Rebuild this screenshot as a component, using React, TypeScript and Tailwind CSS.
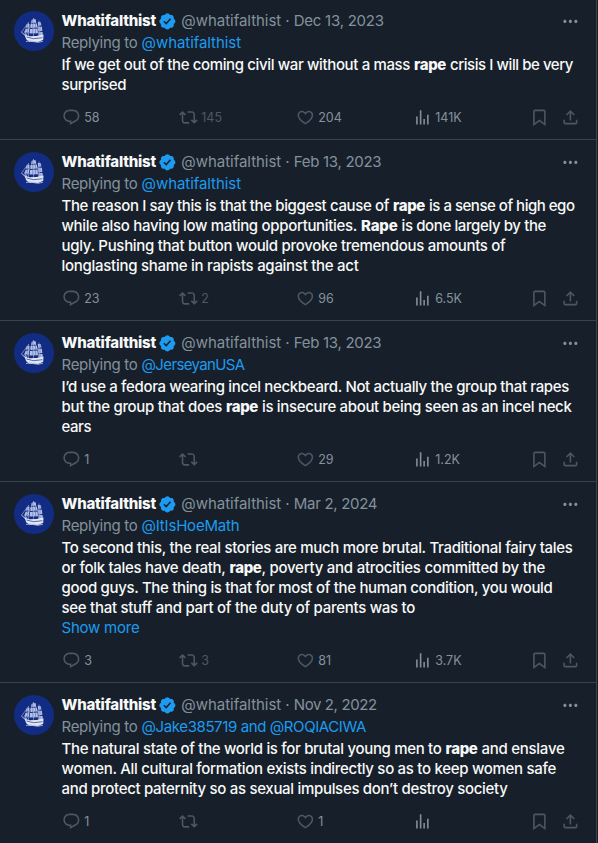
import { useLayoutEffect, useRef, useState, type ReactNode } from "react";

// [text, width in px, bold?]
type Run = [string, number, boolean?];

interface Tweet {
  id: number;
  date: Run;
  replyingTo: Run;
  lines: Run[][];
  more?: boolean;
  replies: string;
  reposts: string;
  likes: string;
  views: string;
}

const TWEETS: Tweet[] = [
  {
    id: 1,
    date: ["Dec 13, 2023", 90],
    replyingTo: ["@whatifalthist", 99.5],
    lines: [
      [["If we get out of the coming civil war without a mass", 348.5], ["rape", 32, true], ["crisis I will be very", 123]],
      [["surprised", 64.5]],
    ],
    replies: "58",
    reposts: "145",
    likes: "204",
    views: "141K",
  },
  {
    id: 2,
    date: ["Feb 13, 2023", 87.5],
    replyingTo: ["@whatifalthist", 99.5],
    lines: [
      [["The reason I say this is that the biggest cause of", 327.5], ["rape", 32, true], ["is a sense of high ego", 145.5]],
      [["while also having low mating opportunities.", 295.5], ["Rape", 36.5, true], ["is done largely by the", 144.5]],
      [["ugly. Pushing that button would provoke tremendous amounts of", 444]],
      [["longlasting shame in rapists against the act", 297]],
    ],
    replies: "23",
    reposts: "2",
    likes: "96",
    views: "6.5K",
  },
  {
    id: 3,
    date: ["Feb 13, 2023", 87.5],
    replyingTo: ["@JerseyanUSA", 103],
    lines: [
      [["I’d use a fedora wearing incel neckbeard. Not actually the group that rapes", 507.5]],
      [["but the group that does", 160.5], ["rape", 32, true], ["is insecure about being seen as an incel neck", 309.5]],
      [["ears", 29.5]],
    ],
    replies: "1",
    reposts: "",
    likes: "29",
    views: "1.2K",
  },
  {
    id: 4,
    date: ["Mar 2, 2024", 83.5],
    replyingTo: ["@ItIsHoeMath", 98],
    lines: [
      [["To second this, the real stories are much more brutal. Traditional fairy tales", 511]],
      [["or folk tales have death,", 164], ["rape", 32, true], [", poverty and atrocities committed by the", 283.5]],
      [["good guys. The thing is that for most of the human condition, you would", 491]],
      [["see that stuff and part of the duty of parents was to", 353.5]],
    ],
    more: true,
    replies: "3",
    reposts: "3",
    likes: "81",
    views: "3.7K",
  },
  {
    id: 5,
    date: ["Nov 2, 2022", 83],
    replyingTo: ["@Jake385719 and @ROQIACIWA", 224.5],
    lines: [
      [["The natural state of the world is for brutal young men to", 380], ["rape", 32, true], ["and enslave", 83]],
      [["women. All cultural formation exists indirectly so as to keep women safe", 494.5]],
      [["and protect paternity so as sexual impulses don’t destroy society", 446]],
    ],
    replies: "1",
    reposts: "",
    likes: "1",
    views: "",
  },
];

const ICONS = {
  reply:
    "M1.751 10c0-4.42 3.584-8 8.005-8h4.366c4.49 0 8.129 3.64 8.129 8.13 0 2.96-1.607 5.68-4.196 7.11l-8.054 4.46v-3.69h-.067c-4.49.1-8.183-3.51-8.183-8.01zm8.005-6c-3.317 0-6.005 2.69-6.005 6 0 3.37 2.77 6.08 6.138 6.01l.351-.01h1.761v2.3l5.087-2.81c1.951-1.08 3.163-3.13 3.163-5.36 0-3.39-2.744-6.13-6.129-6.13H9.756z",
  repost:
    "M4.5 3.88l4.432 4.14-1.364 1.46L5.5 7.55V16c0 1.1.896 2 2 2H13v2H7.5c-2.209 0-4-1.79-4-4V7.55L1.432 9.48.068 8.02 4.5 3.88zM16.5 6H11V4h5.5c2.209 0 4 1.79 4 4v8.45l2.068-1.93 1.364 1.46-4.432 4.14-4.432-4.14 1.364-1.46 2.068 1.93V8c0-1.1-.896-2-2-2z",
  like:
    "M16.697 5.5c-1.222-.06-2.679.51-3.89 2.16l-.805 1.09-.806-1.09C9.984 6.01 8.526 5.44 7.304 5.5c-1.243.07-2.349.78-2.91 1.91-.552 1.12-.633 2.78.479 4.82 1.074 1.97 3.257 4.27 7.129 6.61 3.87-2.34 6.052-4.64 7.126-6.61 1.111-2.04 1.03-3.7.477-4.82-.561-1.13-1.666-1.84-2.908-1.91zm4.187 7.69c-1.351 2.48-4.001 5.12-8.379 7.67l-.503.3-.504-.3c-4.379-2.55-7.029-5.19-8.382-7.67-1.36-2.5-1.41-4.86-.514-6.67.887-1.79 2.647-2.91 4.601-3.01 1.651-.09 3.368.56 4.798 2.01 1.429-1.45 3.146-2.1 4.796-2.01 1.954.1 3.714 1.22 4.601 3.01.896 1.81.846 4.17-.514 6.67z",
  views:
    "M8.75 21V3h2v18h-2zM18 21V8.5h2V21h-2zM4 21l.004-10h2L6 21H4zm9.248 0v-7h2v7h-2z",
  bookmark:
    "M4 4.5C4 3.12 5.119 2 6.5 2h11C18.881 2 20 3.12 20 4.5v18.44l-8-5.71-8 5.71V4.5zM6.5 4c-.276 0-.5.22-.5.5v14.56l6-4.29 6 4.29V4.5c0-.28-.224-.5-.5-.5h-11z",
  share:
    "M12 2.59l5.7 5.7-1.41 1.42L13 6.41V16h-2V6.41l-3.3 3.3-1.41-1.42L12 2.59zM21 15l-.02 3.51c0 1.38-1.12 2.49-2.5 2.49H5.5C4.11 21 3 19.88 3 18.5V15h2v3.5c0 .28.22.5.5.5h12.98c.28 0 .5-.22.5-.5L19 15h2z",
  more:
    "M3 12c0-1.1.9-2 2-2s2 .9 2 2-.9 2-2 2-2-.9-2-2zm9 2c1.1 0 2-.9 2-2s-.9-2-2-2-2 .9-2 2 .9 2 2 2zm7 0c1.1 0 2-.9 2-2s-.9-2-2-2-2 .9-2 2 .9 2 2 2z",
};

function Icon({ name, className = "" }: { name: keyof typeof ICONS; className?: string }) {
  return (
    <svg viewBox="0 0 24 24" className={`size-[18.75px] shrink-0 fill-current ${className}`} aria-hidden="true">
      <path d={ICONS[name]} />
    </svg>
  );
}

function VerifiedBadge() {
  return (
    <svg viewBox="0 0 22 22" className="ml-[1.5px] size-[18.75px] shrink-0 fill-[#1d9bf0]" aria-label="Verified account">
      <path d="M20.396 11c-.018-.646-.215-1.275-.57-1.816-.354-.54-.852-.972-1.438-1.246.223-.607.27-1.264.14-1.897-.131-.634-.437-1.218-.882-1.687-.47-.445-1.053-.75-1.687-.882-.633-.13-1.29-.083-1.897.14-.273-.587-.704-1.086-1.245-1.44S11.647 1.62 11 1.604c-.646.017-1.273.213-1.813.568s-.969.854-1.24 1.44c-.608-.223-1.267-.272-1.902-.14-.635.13-1.22.436-1.69.882-.445.47-.749 1.055-.878 1.688-.13.633-.08 1.29.144 1.896-.587.274-1.087.705-1.443 1.245-.356.54-.555 1.17-.574 1.817.02.647.218 1.276.574 1.817.356.54.856.972 1.443 1.245-.224.606-.274 1.263-.144 1.896.13.634.433 1.218.877 1.688.47.443 1.054.747 1.687.878.633.132 1.29.084 1.897-.136.274.586.705 1.084 1.246 1.439.54.354 1.17.551 1.816.569.647-.016 1.276-.213 1.817-.567s.972-.854 1.245-1.44c.604.239 1.266.296 1.903.164.636-.132 1.22-.447 1.68-.907.46-.46.776-1.044.908-1.681s.075-1.299-.165-1.903c.586-.274 1.084-.705 1.439-1.246.354-.54.551-1.17.569-1.816zM9.662 14.85l-3.429-3.428 1.293-1.302 2.072 2.072 4.4-4.794 1.347 1.246z" />
    </svg>
  );
}

/** Text whose letter spacing is adjusted so that it sets to the given width */
function Fit({ width, className = "", children }: { width: number; className?: string; children: string }) {
  const ref = useRef<HTMLSpanElement>(null);
  const [spacing, setSpacing] = useState(0);

  useLayoutEffect(() => {
    if (!ref.current) return;
    const natural = ref.current.getBoundingClientRect().width - spacing * children.length;
    setSpacing((width - natural) / children.length);
  }, [width, children]);

  return (
    <span ref={ref} className={`whitespace-pre ${className}`} style={{ letterSpacing: `${spacing}px` }}>
      {children}
    </span>
  );
}

function Avatar() {
  return (
    <svg viewBox="0 0 40 40" className="size-10 shrink-0" aria-hidden="true">
      <circle cx="20" cy="20" r="20" fill="#122c84" />
      {/* masts and rigging */}
      <g stroke="#8f9fd0" strokeWidth="0.7" fill="none">
        <path d="M14.5 11v17M19.5 7v21M25 9.5v19M7.5 21l7-9.5M19.5 7.5L12 25M19.5 7.5l9 19M7 21l7 6" />
      </g>
      {/* sails */}
      <g fill="#b4c0e3">
        <path d="M17.5 9l4-1 .8 3.5-5 .5zM16.8 13l6-.6.6 4.2-7 .5zM16 18l7.5-.4.5 4.6-8.5.3z" />
        <path d="M23.8 11l3 .2.6 3.3-3.2.2zM24.2 15.7l3.7.1.4 4.2-3.8.2zM24.6 21l4 .1.2 4.4-4.2.2z" />
        <path d="M12.5 13.5l3-.8-.2 3.5-3.8.6zM11.5 17.8l3.7-.4-.3 3.9-4.4.4z" />
        <path d="M7 20.5l4.5 3-1 .8zM9.5 19l3.5 4.8-1.6-.1z" opacity=".8" />
      </g>
      {/* shadows between the sails */}
      <path d="M18.8 9v13M21.5 12v10M26 12v13M13.3 14v7" stroke="#4f64ae" strokeWidth="0.5" />
      {/* hull and wake */}
      <path d="M10.5 23.5l5 1.8 7-.3 7-1.5-.3 5.2-5 2.3-9-.3-3-2.5z" fill="#e1e6f4" />
      <path d="M12.5 26l7 1.7 9-1" stroke="#344a97" strokeWidth="0.8" fill="none" />
      <path d="M12 30.5q4-1.3 8 .2t9-.5" stroke="#aebae0" strokeWidth="0.9" fill="none" />
    </svg>
  );
}

function Action({ icon, children, className = "" }: { icon: keyof typeof ICONS; children?: ReactNode; className?: string }) {
  return (
    <div className={`flex items-center text-[#4b5864] ${className}`}>
      <Icon name={icon} />
      <span className="pt-px pl-[3.5px] text-[12.5px] leading-4">{children}</span>
    </div>
  );
}

function TweetRow({ tweet }: { tweet: Tweet }) {
  const [date, dateWidth] = tweet.date;
  const [mention, mentionWidth] = tweet.replyingTo;

  return (
    <article className="flex gap-[7.5px] border-b border-[#38444d] py-3 pr-4 pl-3.5">
      <Avatar />
      <div className="min-w-0 flex-1">
        <header className="flex h-5 items-center text-[#84919d]">
          <Fit width={94.5} className="font-extrabold text-[#f7f9f9]">Whatifalthist</Fit>
          <VerifiedBadge />
          <Fit width={100} className="ml-[5px]">@whatifalthist</Fit>
          <span className="w-[12.5px] text-center">·</span>
          <Fit width={dateWidth}>{date}</Fit>
          <Icon name="more" className="ml-auto" />
        </header>

        <p className="mt-0.5 flex h-5 gap-1 text-[#84919d]">
          <Fit width={76}>Replying to</Fit>
          <Fit width={mentionWidth} className="text-[#1d9bf0]">{mention}</Fit>
        </p>

        <div className="mt-0.5 font-[450] text-[#f7f9f9]">
          {tweet.lines.map((runs, i) => (
            <p key={i} className="flex h-5 gap-1">
              {runs.map(([text, width, bold], j) => (
                <Fit key={j} width={width} className={bold ? "font-extrabold" : text.startsWith(",") ? "-ml-1" : ""}>
                  {text}
                </Fit>
              ))}
            </p>
          ))}
          {tweet.more && (
            <p className="flex h-5 font-normal text-[#1d9bf0]">
              <Fit width={78}>Show more</Fit>
            </p>
          )}
        </div>

        <footer className="mt-3 ml-[0.5px] grid h-5 grid-cols-[117px_117px_117px_117px_31px_auto] items-center">
          <Action icon="reply"><span className="text-[#84919d]">{tweet.replies}</span></Action>
          <Action icon="repost">{tweet.reposts}</Action>
          <Action icon="like"><span className="text-[#84919d]">{tweet.likes}</span></Action>
          <Action icon="views" className="text-[#84919d]">{tweet.views}</Action>
          <Action icon="bookmark" />
          <Action icon="share" />
        </footer>
      </div>
    </article>
  );
}

export default function App() {
  return (
    <main className="h-[843px] w-[598px] overflow-hidden bg-[#17202a] font-[Inter,'Noto_Sans',sans-serif] text-[15px] leading-5">
      <div className="-mt-px h-[845px] w-[597px] border-r border-[#38444d]">
        {TWEETS.map((tweet) => (
          <TweetRow key={tweet.id} tweet={tweet} />
        ))}
      </div>
    </main>
  );
}
